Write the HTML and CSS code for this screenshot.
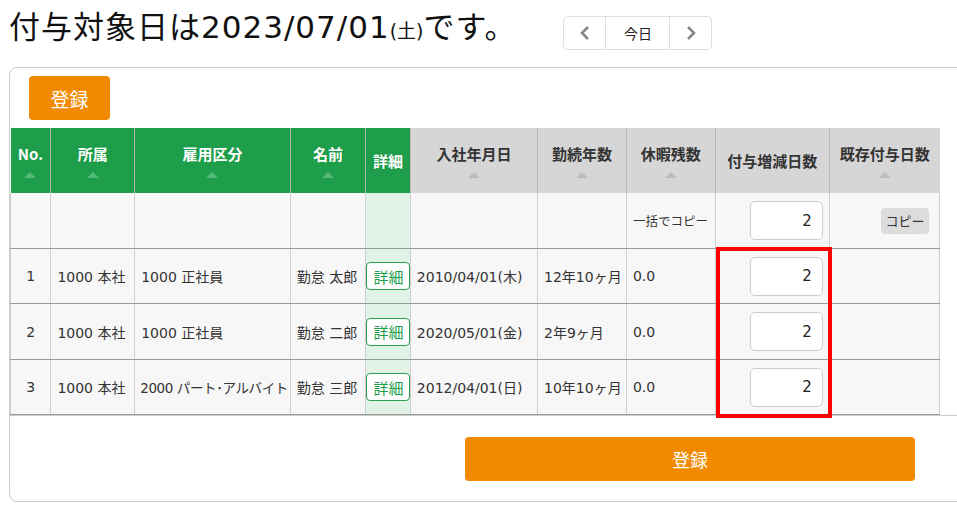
FILE: index.html
```html
<!DOCTYPE html>
<html lang="ja">
<head>
  <meta charset="UTF-8" />
  <title>付与日数一括登録</title>
  <link rel="stylesheet" href="styles.css">
</head>
<body>
  <div class="page-head">
    <h1 class="title">付与対象日は2023/07/01<small>(土)</small>です。</h1>
    <div class="day-nav">
      <button class="nav-btn">
        <svg width="14" height="16" viewBox="0 0 14 16"><polyline points="10,2 4,8 10,14" fill="none" stroke="#888" stroke-width="2.6"/></svg>
      </button>
      <button class="nav-btn today">今日</button>
      <button class="nav-btn">
        <svg width="14" height="16" viewBox="0 0 14 16"><polyline points="4,2 10,8 4,14" fill="none" stroke="#888" stroke-width="2.6"/></svg>
      </button>
    </div>
  </div>

  <div class="card">
    <div class="card-top">
      <button class="btn-save">登録</button>
    </div>

    <div class="table-wrap">
      <table class="grant-table">
        <colgroup>
          <col class="w-no">
          <col class="w-dept">
          <col class="w-type">
          <col class="w-name">
          <col class="w-detail">
          <col class="w-join">
          <col class="w-years">
          <col class="w-rest">
          <col class="w-add">
          <col class="w-exist">
        </colgroup>
        <thead>
          <tr>
            <th class="green">No.<span class="sort"></span></th>
            <th class="green">所属<span class="sort"></span></th>
            <th class="green">雇用区分<span class="sort"></span></th>
            <th class="green">名前<span class="sort"></span></th>
            <th class="green">詳細</th>
            <th>入社年月日<span class="sort"></span></th>
            <th>勤続年数<span class="sort"></span></th>
            <th>休暇残数<span class="sort"></span></th>
            <th>付与増減日数</th>
            <th>既存付与日数<span class="sort"></span></th>
          </tr>
        </thead>
        <tbody>
          <tr class="copy-row">
            <td></td>
            <td></td>
            <td></td>
            <td></td>
            <td class="detail-col"></td>
            <td></td>
            <td></td>
            <td class="small">一括でコピー</td>
            <td class="num"><input class="num-input" value="2"></td>
            <td class="num"><button class="btn-copy">コピー</button></td>
          </tr>
          <tr>
            <td class="center">1</td>
            <td>1000 本社</td>
            <td>1000 正社員</td>
            <td>勤怠 太郎</td>
            <td class="detail-col"><button class="btn-detail">詳細</button></td>
            <td>2010/04/01(木)</td>
            <td>12年10ヶ月</td>
            <td>0.0</td>
            <td class="num"><input class="num-input" value="2"></td>
            <td></td>
          </tr>
          <tr class="tall">
            <td class="center">2</td>
            <td>1000 本社</td>
            <td>1000 正社員</td>
            <td>勤怠 二郎</td>
            <td class="detail-col"><button class="btn-detail">詳細</button></td>
            <td>2020/05/01(金)</td>
            <td>2年9ヶ月</td>
            <td>0.0</td>
            <td class="num"><input class="num-input" value="2"></td>
            <td></td>
          </tr>
          <tr>
            <td class="center">3</td>
            <td>1000 本社</td>
            <td class="tight">2000 パート･アルバイト</td>
            <td>勤怠 三郎</td>
            <td class="detail-col"><button class="btn-detail">詳細</button></td>
            <td>2012/04/01(日)</td>
            <td>10年10ヶ月</td>
            <td>0.0</td>
            <td class="num"><input class="num-input" value="2"></td>
            <td></td>
          </tr>
        </tbody>
      </table>
      <!-- annotation box over the input column -->
      <div class="highlight"></div>
    </div>

    <div class="card-foot">
      <button class="btn-save wide">登録</button>
    </div>
  </div>
</body>
</html>
```

FILE: styles.css
```css
html, body {
  overflow: hidden;
}
body {
  margin: 0;
  background: #fff;
  color: #333;
  font-family: "DejaVu Sans", "Noto Sans CJK JP", sans-serif;
}
button, input {
  font-family: inherit;
}

/* title line */
.page-head {
  display: flex;
  align-items: flex-start;
  height: 67px;
}
.title {
  margin: 7px 0 0 9px;
  font-size: 31px;
  font-weight: normal;
  color: #111;
  line-height: 40px;
  letter-spacing: 1px;
}
.title small {
  font-size: 19px;
  letter-spacing: 0;
}
.day-nav {
  display: flex;
  margin: 16px 0 0 47px;
  border: 1px solid #ddd;
  border-radius: 5px;
  height: 34px;
  box-sizing: border-box;
}
.nav-btn {
  background: #fff;
  border: none;
  width: 41px;
  padding: 0;
  display: flex;
  align-items: center;
  justify-content: center;
  border-radius: 5px;
}
.nav-btn.today {
  width: 65px;
  border-left: 1px solid #ddd;
  border-right: 1px solid #ddd;
  border-radius: 0;
  font-size: 14px;
  color: #222;
}

/* card */
.card {
  margin-left: 9px;
  width: 980px;
  border: 1px solid #ccc;
  border-radius: 8px;
}
.card-top {
  padding: 8px 0 8px 19px;
}
.btn-save {
  background: #f28a00;
  color: #fff;
  border: none;
  border-radius: 4px;
  width: 81px;
  height: 44px;
  font-size: 19px;
  cursor: pointer;
}
.btn-save.wide {
  width: 450px;
  font-size: 18px;
}
.card-foot {
  border-top: 1px solid #ccc;
  padding: 21px 0 20px 455px;
}

/* table */
.table-wrap {
  position: relative;
}
.grant-table {
  border-collapse: collapse;
  table-layout: fixed;
  width: 930px;
  font-size: 14px;
}
.grant-table th {
  height: 65px;
  background: #d6d6d6;
  color: #333;
  font-family: "Noto Sans CJK JP", sans-serif;
  font-size: 15px;
  font-weight: bold;
  border-left: 1px solid #b8b8b8;
  vertical-align: middle;
  padding: 0;
  line-height: 20px;
  white-space: nowrap;
}
.grant-table th:first-child {
  border-left: none;
}
.grant-table th.green {
  background: #1e9e4a;
  color: #fff;
}
.sort {
  display: block;
  width: 0;
  height: 0;
  margin: 8px auto 0;
  border-left: 6px solid transparent;
  border-right: 6px solid transparent;
  border-bottom: 6px solid #bcbcbc;
}
.green .sort {
  border-bottom-color: #56b97a;
}
.w-no { width: 40px; }
.w-dept { width: 83px; }
.w-type { width: 154px; }
.w-name { width: 75px; }
.w-detail { width: 44px; }
.w-join { width: 126px; }
.w-years { width: 88px; }
.w-rest { width: 88px; }
.w-add { width: 113px; }
.w-exist { width: 109px; }

.grant-table td {
  height: 54px;
  background: #f7f7f7;
  border-left: 1px solid #cfcfcf;
  border-right: 1px solid #cfcfcf;
  border-bottom: 1px solid #999;
  padding: 0 0 0 6px;
  white-space: nowrap;
  overflow: hidden;
  vertical-align: middle;
}
.grant-table .copy-row td,
.grant-table .tall td {
  height: 55px;
}
.grant-table td.center {
  text-align: center;
  padding: 0;
}
.grant-table td.tight {
  padding-left: 5px;
  font-size: 13.5px;
  letter-spacing: -0.4px;
}
.grant-table td.small {
  font-size: 12.5px;
}
.grant-table td.num {
  text-align: right;
  padding: 0 6px 0 0;
}
.grant-table td.detail-col {
  background: #e1f2e6;
  padding: 0;
  text-align: center;
}
.num-input {
  width: 73px;
  height: 39px;
  box-sizing: border-box;
  border: 1px solid #ccc;
  border-radius: 5px;
  text-align: right;
  padding: 0 10px 0 0;
  font-size: 15px;
  color: #222;
  background: #fff;
  vertical-align: middle;
}
.btn-copy {
  background: #dcdcdc;
  border: none;
  border-radius: 4px;
  height: 26px;
  width: 48px;
  padding: 0;
  font-size: 13px;
  color: #333;
  margin-right: 4px;
}
.btn-detail {
  width: 44px;
  height: 28px;
  padding: 0;
  border: 1px solid #2a9d50;
  border-radius: 4px;
  background: #fff;
  color: #1e9e4a;
  font-size: 15px;
}

.highlight {
  position: absolute;
  left: 706px;
  top: 119px;
  width: 116px;
  height: 171px;
  box-sizing: border-box;
  border: 4px solid #ff0000;
  pointer-events: none;
}
```
